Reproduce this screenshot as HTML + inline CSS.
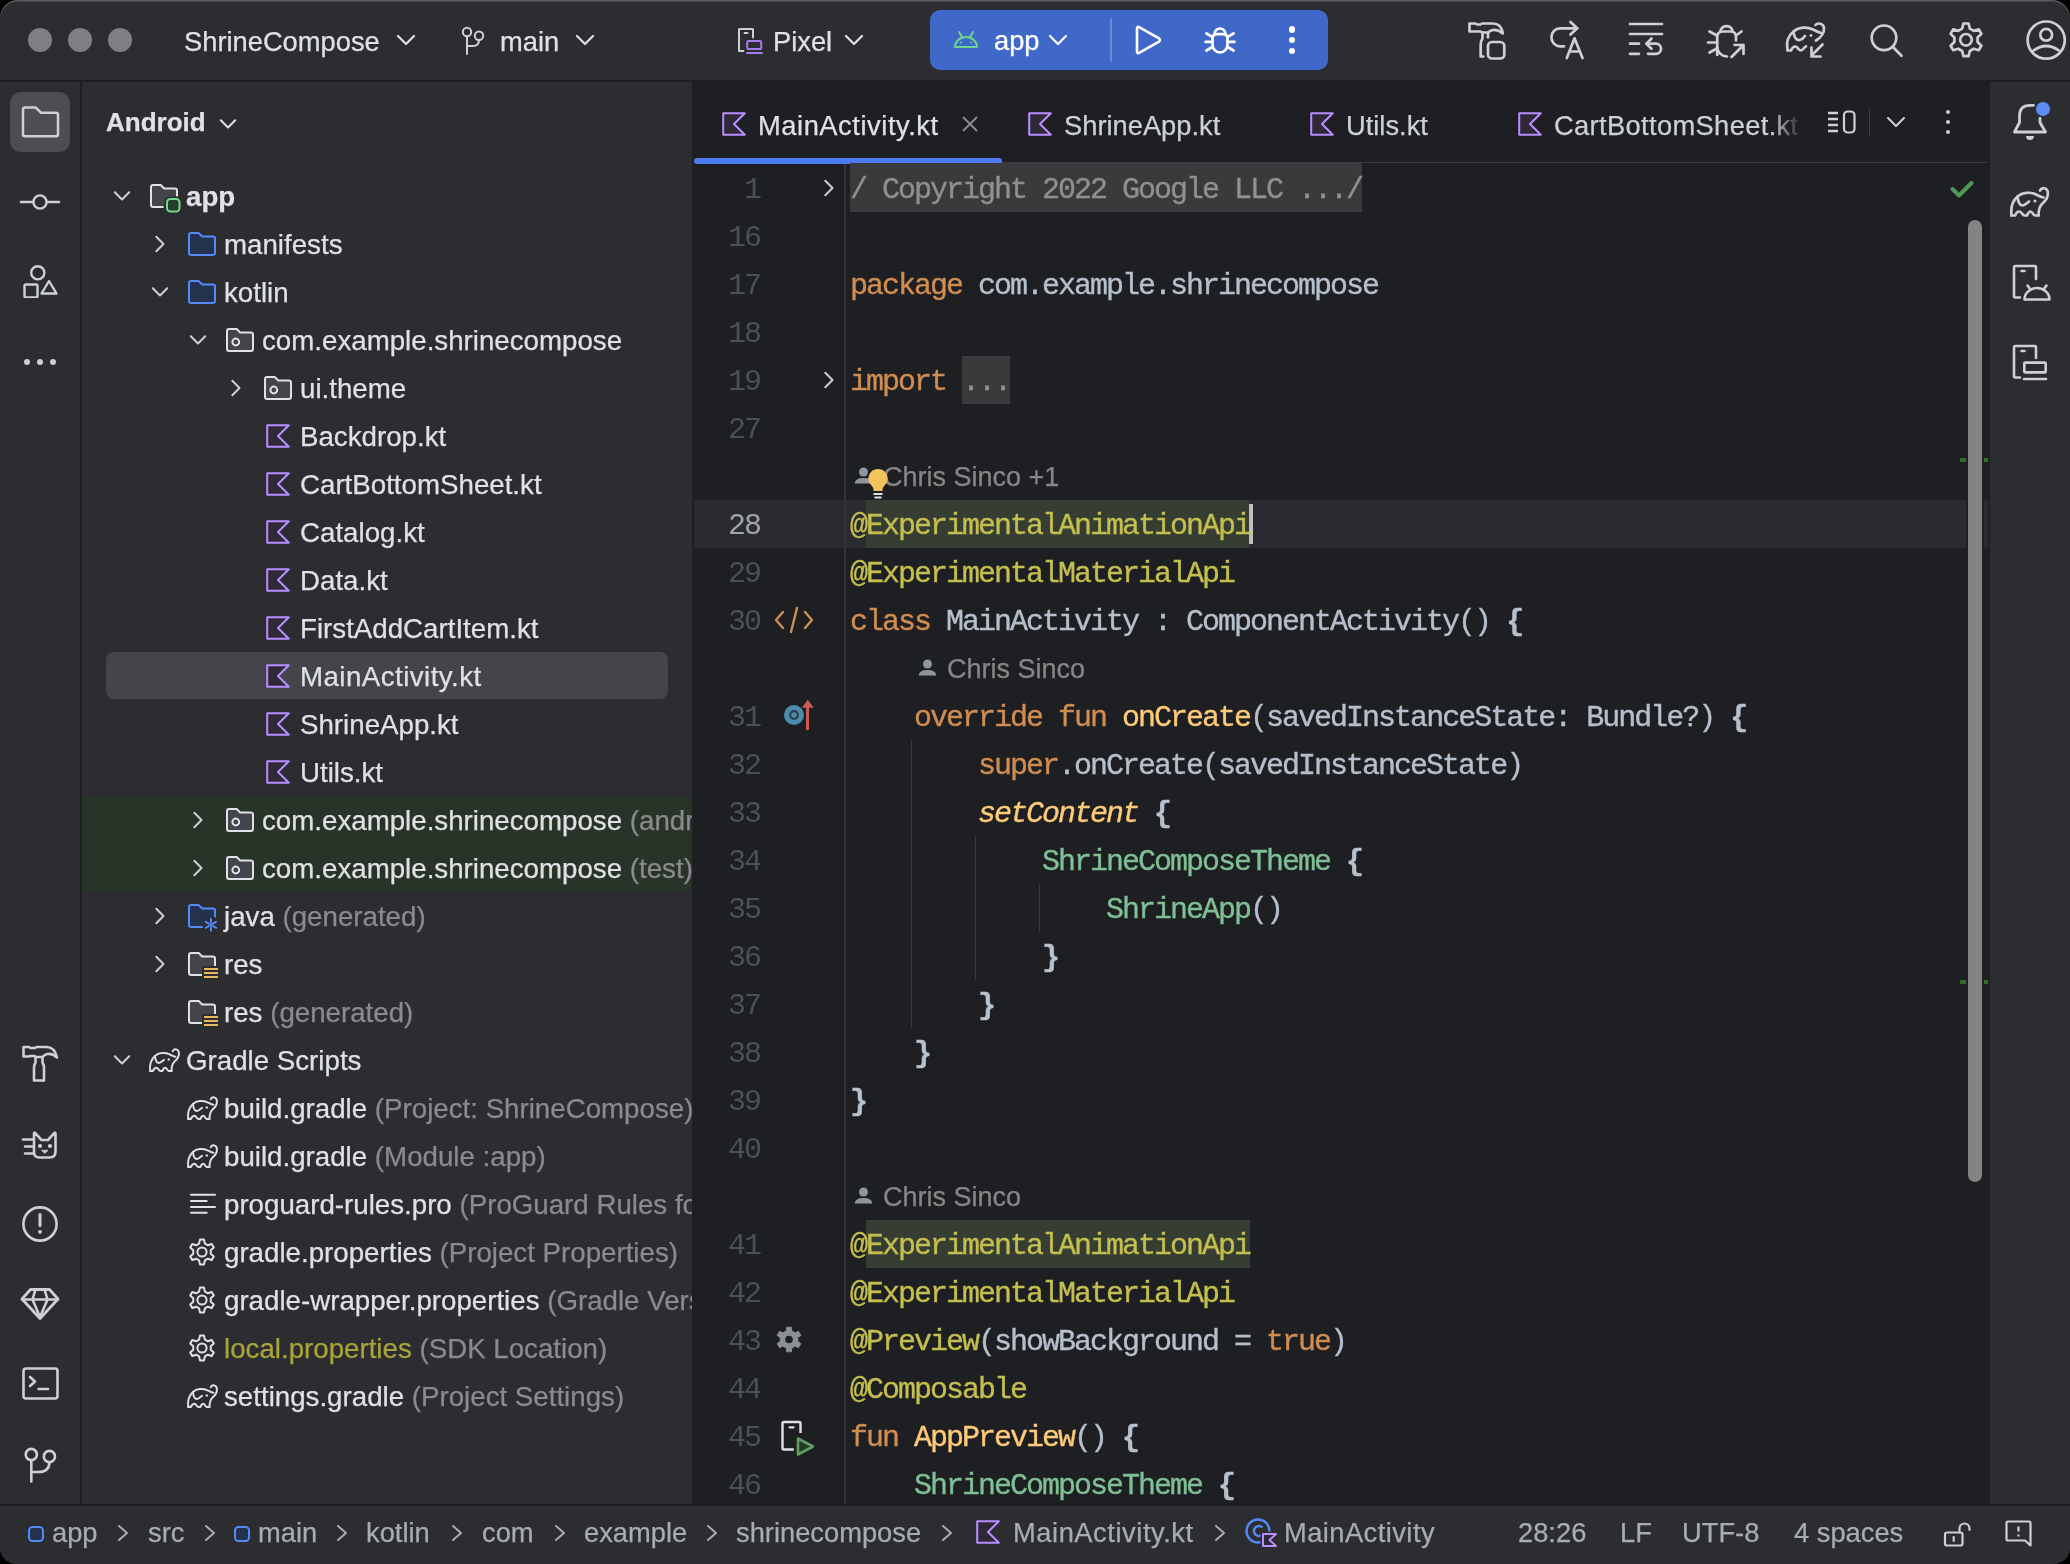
<!DOCTYPE html><html><head><meta charset="utf-8"><title>Android Studio</title><style>
*{box-sizing:border-box;margin:0;padding:0}
html,body{width:2070px;height:1564px;overflow:hidden;background:#000}
#win{position:absolute;left:0;top:0;width:2070px;height:1564px;border-radius:18px 18px 16px 16px;overflow:hidden;will-change:transform;background:#2B2D30;font-family:"Liberation Sans",sans-serif;color:#DFE1E5}
.a{position:absolute}
.t{white-space:pre;-webkit-text-stroke:0.25px currentColor}
.code{font-family:"Liberation Mono",monospace;white-space:pre;-webkit-text-stroke:0.35px currentColor}
</style></head><body><div id="win">
<div class="a" style="left:0;top:0;width:2070px;height:80px;background:#2B2D30"></div>
<div class="a" style="left:0;top:80px;width:2070px;height:2px;background:#1E1F22"></div>
<div class="a" style="left:80px;top:82px;width:2px;height:1422px;background:#1E1F22"></div>
<div class="a" style="left:692px;top:82px;width:1298px;height:1422px;background:#1E1F22"></div>
<div class="a" style="left:0;top:1504px;width:2070px;height:1.5px;background:#1E1F22"></div>
<div class="a" style="left:28px;top:28px;width:24px;height:24px;border-radius:50%;background:#808184"></div>
<div class="a" style="left:68px;top:28px;width:24px;height:24px;border-radius:50%;background:#808184"></div>
<div class="a" style="left:108px;top:28px;width:24px;height:24px;border-radius:50%;background:#808184"></div>
<div class="a t" style="left:184px;top:18px;font-size:27.3px;line-height:48px;color:#DFE1E5;font-weight:normal;">ShrineCompose</div>
<svg class="a" style="left:396px;top:34px" width="20" height="12" viewBox="-2 -2 20 12" fill="none" stroke="#DFE1E5" stroke-width="2.2" stroke-linecap="round" stroke-linejoin="round"><path d="M0 0L8.0 8L16 0"/></svg>
<svg class="a" style="left:455px;top:20px" width="40" height="40" viewBox="0 0 40 40" fill="none" stroke="#CED0D6" stroke-width="2" stroke-linecap="round" stroke-linejoin="round" ><circle cx="12" cy="12" r="4.2"/><circle cx="24" cy="15.7" r="4.2"/><path d="M12 16.5V34M24 20C24 24 22 26 18 26H12"/></svg>
<div class="a t" style="left:500px;top:18px;font-size:27.3px;line-height:48px;color:#DFE1E5;font-weight:normal;">main</div>
<svg class="a" style="left:575px;top:34px" width="20" height="12" viewBox="-2 -2 20 12" fill="none" stroke="#DFE1E5" stroke-width="2.2" stroke-linecap="round" stroke-linejoin="round"><path d="M0 0L8.0 8L16 0"/></svg>
<svg class="a" style="left:730px;top:20px" width="40" height="40" viewBox="0 0 40 40" fill="none" stroke="#CED0D6" stroke-width="2" stroke-linecap="round" stroke-linejoin="round" ><path d="M13.3 31H9.5Q9 31 9 30.5V9.5Q9 9 9.5 9H22.5Q23 9 23 9.5V17.6"/><path d="M14.5 13H17.5"/><rect x="17.2" y="21" width="14" height="8" rx="1.2" stroke="#A97BF0"/><path d="M17 33H32" stroke="#A97BF0"/></svg>
<div class="a t" style="left:773px;top:18px;font-size:27.3px;line-height:48px;color:#DFE1E5;font-weight:normal;">Pixel</div>
<svg class="a" style="left:844px;top:34px" width="20" height="12" viewBox="-2 -2 20 12" fill="none" stroke="#DFE1E5" stroke-width="2.2" stroke-linecap="round" stroke-linejoin="round"><path d="M0 0L8.0 8L16 0"/></svg>
<div class="a" style="left:930px;top:10px;width:398px;height:60px;border-radius:10px;background:#4068C9"></div>
<div class="a" style="left:1110px;top:18px;width:2px;height:44px;background:#6A8AD6"></div>
<svg class="a" style="left:950px;top:25px" width="32" height="28" viewBox="0 0 32 28" fill="none" stroke="#CED0D6" stroke-width="2" stroke-linecap="round" stroke-linejoin="round" ><path d="M5 22A11 10 0 0 1 27 22Z" stroke="#6ED58E"/><path d="M9 7L12 12M23 7L20 12" stroke="#6ED58E"/><circle cx="11" cy="17.5" r="1" fill="#6ED58E" stroke="none"/><circle cx="21" cy="17.5" r="1" fill="#6ED58E" stroke="none"/></svg>
<div class="a t" style="left:994px;top:16.8px;font-size:27.3px;line-height:48px;color:#FFFFFF;font-weight:normal;">app</div>
<svg class="a" style="left:1048px;top:34px" width="20" height="12" viewBox="-2 -2 20 12" fill="none" stroke="#FFFFFF" stroke-width="2.2" stroke-linecap="round" stroke-linejoin="round"><path d="M0 0L8.0 8L16 0"/></svg>
<svg class="a" style="left:1130px;top:22px" width="36" height="36" viewBox="0 0 36 36" fill="none" stroke="#CED0D6" stroke-width="2" stroke-linecap="round" stroke-linejoin="round" ><path d="M7 6.5Q7 4 9.5 5.4L29 16.4Q31 18 29 19.6L9.5 30.6Q7 32 7 29.5Z" stroke="#FFFFFF" stroke-width="2.6"/></svg>
<svg class="a" style="left:1200px;top:22px" width="40" height="36" viewBox="0 0 40 36" fill="none" stroke="#CED0D6" stroke-width="2" stroke-linecap="round" stroke-linejoin="round" ><path d="M14.5 12A5.5 5.5 0 0 1 25.5 12" stroke="#fff" stroke-width="2.7"/><path d="M12.5 16.5Q12.5 12.2 17 12.2H23Q27.5 12.2 27.5 16.5V22.5A7.5 8 0 0 1 12.5 22.5Z" stroke="#fff" stroke-width="2.7"/><path d="M6.5 11.5L12.3 14.8M33.5 11.5L27.7 14.8M5.5 19.8H12.5M34.5 19.8H27.5M6.5 28.5L12.3 25M33.5 28.5L27.7 25" stroke="#fff" stroke-width="2.7"/></svg>
<div class="a" style="left:1288.6px;top:26.3px;width:6.4px;height:6.4px;border-radius:50%;background:#fff"></div>
<div class="a" style="left:1288.6px;top:37.0px;width:6.4px;height:6.4px;border-radius:50%;background:#fff"></div>
<div class="a" style="left:1288.6px;top:47.599999999999994px;width:6.4px;height:6.4px;border-radius:50%;background:#fff"></div>
<svg class="a" style="left:1460px;top:15px" width="50" height="50" viewBox="0 0 50 50" fill="none" stroke="#CED0D6" stroke-width="2.7" stroke-linecap="round" stroke-linejoin="round" ><path d="M9.5 8.5H15.5L17 9.5H20.5L22 8.5H33C38.5 8.5 42 12.5 42.8 18.5C39.5 15.5 36 14.8 33 15C31 15.2 29.5 16.2 28 17.5H22L20.5 16.5H17L15.5 16.5H9.5Z"/><path d="M22.5 17.5V23.5Q20.7 26 20.7 30V41.5H23.3"/><path d="M28 17.5V22.3"/><rect x="28" y="27" width="16.3" height="16.5" rx="4"/></svg>
<svg class="a" style="left:1540px;top:15px" width="50" height="50" viewBox="0 0 50 50" fill="none" stroke="#CED0D6" stroke-width="2.7" stroke-linecap="round" stroke-linejoin="round" ><path d="M24 31.3H20A8.6 9 0 0 1 20 13.3H37.2"/><path d="M30.5 7L37.2 13.3L30.5 19.6"/><path d="M26.8 43L34.5 23.3L42.5 43M29.3 36.5H40"/></svg>
<svg class="a" style="left:1620px;top:15px" width="50" height="50" viewBox="0 0 50 50" fill="none" stroke="#CED0D6" stroke-width="2.7" stroke-linecap="round" stroke-linejoin="round" ><path d="M10 9H42M10 19H42M10 28.7H19M10 38.8H19"/><path d="M28 38.8H36A5 5 0 0 0 36 28.7H26.5"/><path d="M31.5 23.5L26.5 28.7L31.5 33.8"/></svg>
<svg class="a" style="left:1700px;top:15px" width="50" height="50" viewBox="0 0 50 50" fill="none" stroke="#CED0D6" stroke-width="2.7" stroke-linecap="round" stroke-linejoin="round" ><path d="M20.5 15.5A6.5 7 0 0 1 32.5 15.5"/><path d="M17.2 40V22Q17.2 16.5 23 16.5H30.5Q36 16.5 36 22V25.5"/><path d="M17.2 32A10 9.5 0 0 0 27 41.5"/><path d="M9.5 16.5L17 20.5M8 27.5H17M9.5 37.5L17 33.5M41.5 16.5L36 20.5"/><path d="M31.5 42L43.5 30M34.5 30H43.5V39"/></svg>
<svg class="a" style="left:1780px;top:15px" width="50" height="50" viewBox="0 0 50 50" fill="none" stroke="#CED0D6" stroke-width="2.7" stroke-linecap="round" stroke-linejoin="round" ><path d="M7.5 35C6 27.5 8.5 20.5 13.5 16.5C19 12 27 11.5 33 14.5C36 16 38.5 17.5 41.5 18"/><path d="M35.5 10C37.5 7.5 43.5 8 44 13C44.5 17.5 41 22.5 36 25.5"/><path d="M13.5 16.5C14 22 16 25.5 19.5 25C22 24.5 24 22.5 25 21"/><path d="M7.5 35.5H11C12 33 13.5 31.5 15.5 31.5C17.5 31.5 18.5 35.5 21 35.5C23 35.5 24 32 26 31.5"/><circle cx="31" cy="20.5" r="1.4" fill="#CED0D6" stroke="none"/><path d="M42.5 29.5L32 40M31.5 32.5V41.5H40.5"/></svg>
<svg class="a" style="left:1860px;top:15px" width="50" height="50" viewBox="0 0 50 50" fill="none" stroke="#CED0D6" stroke-width="2.7" stroke-linecap="round" stroke-linejoin="round" ><circle cx="24" cy="22.8" r="12.3"/><path d="M33 32L41.5 40.8"/></svg>
<svg class="a" style="left:1940px;top:15px" width="50" height="50" viewBox="0 0 50 50" fill="none" stroke="#CED0D6" stroke-width="2.7" stroke-linecap="round" stroke-linejoin="round" ><path d="M28.58 8.50L23.42 8.50L22.16 13.64L18.26 15.89L13.18 14.42L10.60 18.89L14.42 22.55L14.42 27.05L10.60 30.71L13.18 35.18L18.26 33.71L22.16 35.96L23.42 41.10L28.58 41.10L29.84 35.96L33.74 33.71L38.82 35.18L41.40 30.71L37.58 27.05L37.58 22.55L41.40 18.89L38.82 14.42L33.74 15.89L29.84 13.64Z"/><circle cx="26" cy="24.8" r="5.8"/></svg>
<svg class="a" style="left:2020px;top:15px" width="50" height="50" viewBox="0 0 50 50" fill="none" stroke="#CED0D6" stroke-width="2.7" stroke-linecap="round" stroke-linejoin="round" ><circle cx="26.2" cy="25.1" r="18.6"/><circle cx="26.2" cy="19.8" r="5.9"/><path d="M13.5 35.5Q26.2 26.5 39 35.5"/></svg>
<div class="a" style="left:10px;top:92px;width:60px;height:60px;border-radius:11px;background:#4C4E54"></div>
<svg class="a" style="left:16px;top:98px" width="48" height="48" viewBox="0 0 48 48" fill="none" stroke="#CED0D6" stroke-width="2" stroke-linecap="round" stroke-linejoin="round" ><path d="M7 11.5Q7 9.6 9 9.6H19.8L24.9 14.7H40Q42 14.7 42 16.7V36.2Q42 38.2 40 38.2H9Q7 38.2 7 36.2Z" stroke-width="2.5"/></svg>
<svg class="a" style="left:16px;top:178px" width="48" height="48" viewBox="0 0 48 48" fill="none" stroke="#CED0D6" stroke-width="2" stroke-linecap="round" stroke-linejoin="round" ><circle cx="24" cy="24" r="6.6" stroke-width="2.4"/><path d="M5 24H17.2M30.8 24H43" stroke-width="2.4"/></svg>
<svg class="a" style="left:16px;top:250px" width="48" height="48" viewBox="0 0 48 48" fill="none" stroke="#CED0D6" stroke-width="2" stroke-linecap="round" stroke-linejoin="round" ><circle cx="21.8" cy="22.8" r="6.6" stroke-width="2.4"/><rect x="8.5" y="34.5" width="13" height="13" rx="1.5" stroke-width="2.4"/><path d="M25.5 43.5L33 31L40.5 43.5Z" stroke-width="2.4"/></svg>
<div class="a" style="left:23.6px;top:358.6px;width:6.4px;height:6.4px;border-radius:50%;background:#CED0D6"></div>
<div class="a" style="left:36.8px;top:358.6px;width:6.4px;height:6.4px;border-radius:50%;background:#CED0D6"></div>
<div class="a" style="left:49.8px;top:358.6px;width:6.4px;height:6.4px;border-radius:50%;background:#CED0D6"></div>
<svg class="a" style="left:16px;top:1040px" width="48" height="48" viewBox="0 0 48 48" fill="none" stroke="#CED0D6" stroke-width="2" stroke-linecap="round" stroke-linejoin="round" ><path d="M7.5 7H13L14.5 8H19L20.5 7H30.5C36 7 39.5 11 41 17.5C38 14.5 34 13.5 31 14C29 14.5 27.5 16 26.5 17H20L18.5 16H14L13 16.5H7.5Z" stroke-width="2.6"/><path d="M19.5 17V22.5Q18 25 18 28V40.5H28V28Q28 25 26.5 22.5V17" stroke-width="2.6"/></svg>
<svg class="a" style="left:16px;top:1122px" width="48" height="48" viewBox="0 0 48 48" fill="none" stroke="#CED0D6" stroke-width="2" stroke-linecap="round" stroke-linejoin="round" ><path d="M18 11.5Q18 10 19.3 11.2L25.5 18H32L38.2 11.2Q39.5 10 39.5 11.5V29.5Q39.5 35.5 33.5 35.5H23.5Q18 35.5 18 30Z" stroke-width="2.6"/><path d="M7 17.5H17M9 24.5H17M9 31.5H17" stroke-width="2.6"/><circle cx="24" cy="24" r="2.1" fill="#CED0D6" stroke="none"/><circle cx="34" cy="24" r="2.1" fill="#CED0D6" stroke="none"/><path d="M26 28.3H32L29 31.2Z" fill="#CED0D6" stroke-width="1"/></svg>
<svg class="a" style="left:16px;top:1200px" width="48" height="48" viewBox="0 0 48 48" fill="none" stroke="#CED0D6" stroke-width="2" stroke-linecap="round" stroke-linejoin="round" ><circle cx="24" cy="24" r="16.6" stroke-width="2.6"/><path d="M24 14.5V25.5" stroke-width="3"/><circle cx="24" cy="31.8" r="1.9" fill="#CED0D6" stroke="none"/></svg>
<svg class="a" style="left:16px;top:1280px" width="48" height="48" viewBox="0 0 48 48" fill="none" stroke="#CED0D6" stroke-width="2" stroke-linecap="round" stroke-linejoin="round" ><path d="M14.5 9.5H33.5L42 19L24 38.5L6 19Z" stroke-width="2.8"/><path d="M6 19.5H42M19.5 9.5L16.5 19.5L24 37L31.5 19.5L28.5 9.5" stroke-width="2.6"/></svg>
<svg class="a" style="left:16px;top:1360px" width="48" height="48" viewBox="0 0 48 48" fill="none" stroke="#CED0D6" stroke-width="2" stroke-linecap="round" stroke-linejoin="round" ><rect x="7.5" y="8.5" width="34" height="30" rx="2.5" stroke-width="2.6"/><path d="M14 17L19 21.5L14 26M22.5 29H32" stroke-width="2.6"/></svg>
<svg class="a" style="left:16px;top:1440px" width="48" height="48" viewBox="0 0 48 48" fill="none" stroke="#CED0D6" stroke-width="2" stroke-linecap="round" stroke-linejoin="round" ><circle cx="15.3" cy="14.5" r="5.6" stroke-width="2.6"/><circle cx="33.4" cy="16.5" r="5.6" stroke-width="2.6"/><path d="M15.3 20.2V41.5M33.4 22.2Q33.4 32 22 32H15.3" stroke-width="2.6"/></svg>
<svg class="a" style="left:2005px;top:95px" width="50" height="50" viewBox="0 0 50 50" fill="none" stroke="#CED0D6" stroke-width="2" stroke-linecap="round" stroke-linejoin="round" ><path d="M28.5 10.3H25Q14.5 10.3 14.5 21V27.5L9.5 37H40.5L35 27.5V23.5" stroke-width="2.8"/><path d="M21 41H29A4 4 0 0 1 21 41Z" fill="#CED0D6" stroke="none"/></svg>
<div class="a" style="left:2036px;top:102px;width:14px;height:14px;border-radius:50%;background:#5E8CF6"></div>
<svg class="a" style="left:2002px;top:176px" width="50" height="50" viewBox="0 0 50 50" fill="none" stroke="#CED0D6" stroke-width="2.7" stroke-linecap="round" stroke-linejoin="round" ><path d="M9.5 39.5C8.5 31 11 24.5 15.5 20.5C20 16.5 28 15.5 34 18.5C37 20 39 21.5 41.5 21.5"/><path d="M38 14.5C40 11 45 11.5 45.8 16C46.5 20.5 43.5 25 40 28C37.5 30.5 36.5 34 36.5 39.5"/><path d="M9.5 39.5H13C14 37 15.5 35.5 17.5 35.5C19.5 35.5 20.5 39.5 22.5 39.5H25C26 37 27 35.5 28.5 35.5C30.5 35.5 31.5 39.5 33 39.5H36.5"/><path d="M15.5 20.5C16 25.5 17.5 29.5 20.5 29.5C23 29.5 25 27 27 25.5"/><circle cx="33" cy="25" r="1.5" fill="#CED0D6" stroke="none"/></svg>
<svg class="a" style="left:2005px;top:258px" width="50" height="50" viewBox="0 0 50 50" fill="none" stroke="#CED0D6" stroke-width="2" stroke-linecap="round" stroke-linejoin="round" ><path d="M15 39.5H10.5Q9 39.5 9 38V9.5Q9 8 10.5 8H29.5Q31 8 31 9.5V21" stroke-width="2.6"/><path d="M16.5 13H19.5" stroke-width="2.6"/><path d="M19.5 41.5A12.5 11.5 0 0 1 44.5 41.5Z" stroke-width="2.6"/><path d="M22.5 27.5L25.5 31.5M41.5 27.5L38.5 31.5" stroke-width="2.6"/></svg>
<svg class="a" style="left:2005px;top:338px" width="50" height="50" viewBox="0 0 50 50" fill="none" stroke="#CED0D6" stroke-width="2" stroke-linecap="round" stroke-linejoin="round" ><path d="M15 39.5H10.5Q9 39.5 9 38V9.5Q9 8 10.5 8H29.5Q31 8 31 9.5V20" stroke-width="2.6"/><path d="M16.5 13H19.5" stroke-width="2.6"/><rect x="19.3" y="24.6" width="21.4" height="9.8" rx="1" stroke-width="2.6"/><path d="M19 41H41" stroke-width="2.6"/></svg>
<div class="a" style="left:82px;top:82px;width:610px;height:1422px;overflow:hidden;background:#2B2D30"><div class="a" style="left:-82px;top:-82px;width:2070px;height:1564px">
<div class="a t" style="left:106px;top:98px;font-size:26px;line-height:48px;color:#DFE1E5;font-weight:bold;">Android</div>
<svg class="a" style="left:219px;top:118.5px;overflow:visible" width="18" height="10" viewBox="0 0 18 10" fill="none" stroke="#DFE1E5" stroke-width="2" stroke-linecap="round" stroke-linejoin="round"><path d="M1.8 1.3L9 8.5L16.2 1.3"/></svg>
<div class="a" style="left:82px;top:796px;width:610px;height:96px;background:#293429"></div>
<div class="a" style="left:106px;top:652px;width:562px;height:47px;border-radius:8px;background:#43454A"></div>
<svg class="a" style="left:113px;top:191px;overflow:visible" width="18" height="10" viewBox="0 0 18 10" fill="none" stroke="#CED0D6" stroke-width="2" stroke-linecap="round" stroke-linejoin="round"><path d="M1.8 1.3L9 8.5L16.2 1.3"/></svg>
<svg class="a" style="left:150px;top:184px;overflow:visible" width="28" height="24" viewBox="0 0 28 24" fill="none" stroke="#CED0D6" stroke-width="2" stroke-linecap="round" stroke-linejoin="round"><path d="M13 23H3.2Q1 23 1 20.8V3.2Q1 1 3.2 1H10.7L14.2 4.5H24.8Q27 4.5 27 6.7V12" fill="#43454A" stroke="#DFE1E5"/><path d="M13 23V12H27" fill="#43454A" stroke="none"/><rect x="17" y="15" width="12.5" height="12.5" rx="3.5" fill="#253B2C" stroke="#2B2D30" stroke-width="5"/><rect x="17" y="15" width="12.5" height="12.5" rx="3.5" fill="#253B2C" stroke="#6FDD8B"/></svg>
<div class="a t" style="left:186px;top:173px;font-size:27.7px;line-height:48px;color:#DFE1E5;font-weight:bold;">app</div>
<svg class="a" style="left:154.5px;top:235px;overflow:visible" width="10" height="18" viewBox="0 0 10 18" fill="none" stroke="#CED0D6" stroke-width="2" stroke-linecap="round" stroke-linejoin="round"><path d="M1.3 1.8L8.5 9L1.3 16.2"/></svg>
<svg class="a" style="left:188px;top:232px;overflow:visible" width="28" height="24" viewBox="0 0 28 24" fill="none" stroke="#CED0D6" stroke-width="2" stroke-linecap="round" stroke-linejoin="round"><path d="M1 3.2Q1 1 3.2 1H10.7L14.2 4.5H24.8Q27 4.5 27 6.7V20.8Q27 23 24.8 23H3.2Q1 23 1 20.8Z" fill="#25324D" stroke="#548AF7"/></svg>
<div class="a t" style="left:224px;top:221px;font-size:27.7px;line-height:48px;color:#DFE1E5;font-weight:normal;">manifests</div>
<svg class="a" style="left:151px;top:287px;overflow:visible" width="18" height="10" viewBox="0 0 18 10" fill="none" stroke="#CED0D6" stroke-width="2" stroke-linecap="round" stroke-linejoin="round"><path d="M1.8 1.3L9 8.5L16.2 1.3"/></svg>
<svg class="a" style="left:188px;top:280px;overflow:visible" width="28" height="24" viewBox="0 0 28 24" fill="none" stroke="#CED0D6" stroke-width="2" stroke-linecap="round" stroke-linejoin="round"><path d="M1 3.2Q1 1 3.2 1H10.7L14.2 4.5H24.8Q27 4.5 27 6.7V20.8Q27 23 24.8 23H3.2Q1 23 1 20.8Z" fill="#25324D" stroke="#548AF7"/></svg>
<div class="a t" style="left:224px;top:269px;font-size:27.7px;line-height:48px;color:#DFE1E5;font-weight:normal;">kotlin</div>
<svg class="a" style="left:189px;top:335px;overflow:visible" width="18" height="10" viewBox="0 0 18 10" fill="none" stroke="#CED0D6" stroke-width="2" stroke-linecap="round" stroke-linejoin="round"><path d="M1.8 1.3L9 8.5L16.2 1.3"/></svg>
<svg class="a" style="left:226px;top:328px;overflow:visible" width="28" height="24" viewBox="0 0 28 24" fill="none" stroke="#CED0D6" stroke-width="2" stroke-linecap="round" stroke-linejoin="round"><path d="M1 3.2Q1 1 3.2 1H10.7L14.2 4.5H24.8Q27 4.5 27 6.7V20.8Q27 23 24.8 23H3.2Q1 23 1 20.8Z" fill="#43454A" stroke="#DFE1E5"/><circle cx="9.8" cy="14" r="3.4" stroke="#DFE1E5"/></svg>
<div class="a t" style="left:262px;top:317px;font-size:27.7px;line-height:48px;color:#DFE1E5;font-weight:normal;">com.example.shrinecompose</div>
<svg class="a" style="left:230.5px;top:379px;overflow:visible" width="10" height="18" viewBox="0 0 10 18" fill="none" stroke="#CED0D6" stroke-width="2" stroke-linecap="round" stroke-linejoin="round"><path d="M1.3 1.8L8.5 9L1.3 16.2"/></svg>
<svg class="a" style="left:264px;top:376px;overflow:visible" width="28" height="24" viewBox="0 0 28 24" fill="none" stroke="#CED0D6" stroke-width="2" stroke-linecap="round" stroke-linejoin="round"><path d="M1 3.2Q1 1 3.2 1H10.7L14.2 4.5H24.8Q27 4.5 27 6.7V20.8Q27 23 24.8 23H3.2Q1 23 1 20.8Z" fill="#43454A" stroke="#DFE1E5"/><circle cx="9.8" cy="14" r="3.4" stroke="#DFE1E5"/></svg>
<div class="a t" style="left:300px;top:365px;font-size:27.7px;line-height:48px;color:#DFE1E5;font-weight:normal;">ui.theme</div>
<svg class="a" style="left:266px;top:424px;overflow:visible" width="24" height="24" viewBox="0 0 24 24" fill="none" stroke="#CED0D6" stroke-width="2" stroke-linecap="round" stroke-linejoin="round"><path d="M1.2 1.2H22.8L12 12L22.8 22.8H1.2Z" fill="#2F2838" stroke="#B98EFF"/></svg>
<div class="a t" style="left:300px;top:413px;font-size:27.7px;line-height:48px;color:#DFE1E5;font-weight:normal;">Backdrop.kt</div>
<svg class="a" style="left:266px;top:472px;overflow:visible" width="24" height="24" viewBox="0 0 24 24" fill="none" stroke="#CED0D6" stroke-width="2" stroke-linecap="round" stroke-linejoin="round"><path d="M1.2 1.2H22.8L12 12L22.8 22.8H1.2Z" fill="#2F2838" stroke="#B98EFF"/></svg>
<div class="a t" style="left:300px;top:461px;font-size:27.7px;line-height:48px;color:#DFE1E5;font-weight:normal;">CartBottomSheet.kt</div>
<svg class="a" style="left:266px;top:520px;overflow:visible" width="24" height="24" viewBox="0 0 24 24" fill="none" stroke="#CED0D6" stroke-width="2" stroke-linecap="round" stroke-linejoin="round"><path d="M1.2 1.2H22.8L12 12L22.8 22.8H1.2Z" fill="#2F2838" stroke="#B98EFF"/></svg>
<div class="a t" style="left:300px;top:509px;font-size:27.7px;line-height:48px;color:#DFE1E5;font-weight:normal;">Catalog.kt</div>
<svg class="a" style="left:266px;top:568px;overflow:visible" width="24" height="24" viewBox="0 0 24 24" fill="none" stroke="#CED0D6" stroke-width="2" stroke-linecap="round" stroke-linejoin="round"><path d="M1.2 1.2H22.8L12 12L22.8 22.8H1.2Z" fill="#2F2838" stroke="#B98EFF"/></svg>
<div class="a t" style="left:300px;top:557px;font-size:27.7px;line-height:48px;color:#DFE1E5;font-weight:normal;">Data.kt</div>
<svg class="a" style="left:266px;top:616px;overflow:visible" width="24" height="24" viewBox="0 0 24 24" fill="none" stroke="#CED0D6" stroke-width="2" stroke-linecap="round" stroke-linejoin="round"><path d="M1.2 1.2H22.8L12 12L22.8 22.8H1.2Z" fill="#2F2838" stroke="#B98EFF"/></svg>
<div class="a t" style="left:300px;top:605px;font-size:27.7px;line-height:48px;color:#DFE1E5;font-weight:normal;">FirstAddCartItem.kt</div>
<svg class="a" style="left:266px;top:664px;overflow:visible" width="24" height="24" viewBox="0 0 24 24" fill="none" stroke="#CED0D6" stroke-width="2" stroke-linecap="round" stroke-linejoin="round"><path d="M1.2 1.2H22.8L12 12L22.8 22.8H1.2Z" fill="#2F2838" stroke="#B98EFF"/></svg>
<div class="a t" style="left:300px;top:653px;font-size:27.7px;line-height:48px;color:#DFE1E5;font-weight:normal;letter-spacing:0.45px">MainActivity.kt</div>
<svg class="a" style="left:266px;top:712px;overflow:visible" width="24" height="24" viewBox="0 0 24 24" fill="none" stroke="#CED0D6" stroke-width="2" stroke-linecap="round" stroke-linejoin="round"><path d="M1.2 1.2H22.8L12 12L22.8 22.8H1.2Z" fill="#2F2838" stroke="#B98EFF"/></svg>
<div class="a t" style="left:300px;top:701px;font-size:27.7px;line-height:48px;color:#DFE1E5;font-weight:normal;">ShrineApp.kt</div>
<svg class="a" style="left:266px;top:760px;overflow:visible" width="24" height="24" viewBox="0 0 24 24" fill="none" stroke="#CED0D6" stroke-width="2" stroke-linecap="round" stroke-linejoin="round"><path d="M1.2 1.2H22.8L12 12L22.8 22.8H1.2Z" fill="#2F2838" stroke="#B98EFF"/></svg>
<div class="a t" style="left:300px;top:749px;font-size:27.7px;line-height:48px;color:#DFE1E5;font-weight:normal;">Utils.kt</div>
<svg class="a" style="left:192.5px;top:811px;overflow:visible" width="10" height="18" viewBox="0 0 10 18" fill="none" stroke="#CED0D6" stroke-width="2" stroke-linecap="round" stroke-linejoin="round"><path d="M1.3 1.8L8.5 9L1.3 16.2"/></svg>
<svg class="a" style="left:226px;top:808px;overflow:visible" width="28" height="24" viewBox="0 0 28 24" fill="none" stroke="#CED0D6" stroke-width="2" stroke-linecap="round" stroke-linejoin="round"><path d="M1 3.2Q1 1 3.2 1H10.7L14.2 4.5H24.8Q27 4.5 27 6.7V20.8Q27 23 24.8 23H3.2Q1 23 1 20.8Z" fill="#43454A" stroke="#DFE1E5"/><circle cx="9.8" cy="14" r="3.4" stroke="#DFE1E5"/></svg>
<div class="a t" style="left:262px;top:797px;font-size:27.7px;line-height:48px;color:#DFE1E5;font-weight:normal;">com.example.shrinecompose<span style="color:#8A8B8D"> (androidTest)</span></div>
<svg class="a" style="left:192.5px;top:859px;overflow:visible" width="10" height="18" viewBox="0 0 10 18" fill="none" stroke="#CED0D6" stroke-width="2" stroke-linecap="round" stroke-linejoin="round"><path d="M1.3 1.8L8.5 9L1.3 16.2"/></svg>
<svg class="a" style="left:226px;top:856px;overflow:visible" width="28" height="24" viewBox="0 0 28 24" fill="none" stroke="#CED0D6" stroke-width="2" stroke-linecap="round" stroke-linejoin="round"><path d="M1 3.2Q1 1 3.2 1H10.7L14.2 4.5H24.8Q27 4.5 27 6.7V20.8Q27 23 24.8 23H3.2Q1 23 1 20.8Z" fill="#43454A" stroke="#DFE1E5"/><circle cx="9.8" cy="14" r="3.4" stroke="#DFE1E5"/></svg>
<div class="a t" style="left:262px;top:845px;font-size:27.7px;line-height:48px;color:#DFE1E5;font-weight:normal;">com.example.shrinecompose<span style="color:#8A8B8D"> (test)</span></div>
<svg class="a" style="left:154.5px;top:907px;overflow:visible" width="10" height="18" viewBox="0 0 10 18" fill="none" stroke="#CED0D6" stroke-width="2" stroke-linecap="round" stroke-linejoin="round"><path d="M1.3 1.8L8.5 9L1.3 16.2"/></svg>
<svg class="a" style="left:188px;top:904px;overflow:visible" width="28" height="24" viewBox="0 0 28 24" fill="none" stroke="#CED0D6" stroke-width="2" stroke-linecap="round" stroke-linejoin="round"><path d="M1 3.2Q1 1 3.2 1H10.7L14.2 4.5H24.8Q27 4.5 27 6.7V20.8Q27 23 24.8 23H3.2Q1 23 1 20.8Z" fill="#25324D" stroke="#548AF7"/><circle cx="22.9" cy="20.8" r="8.5" fill="#2B2D30" stroke="none"/><path d="M22.90 18.40L22.90 14.80" stroke="#548AF7" stroke-width="2"/><path d="M24.98 19.60L28.10 17.80" stroke="#548AF7" stroke-width="2"/><path d="M24.98 22.00L28.10 23.80" stroke="#548AF7" stroke-width="2"/><path d="M22.90 23.20L22.90 26.80" stroke="#548AF7" stroke-width="2"/><path d="M20.82 22.00L17.70 23.80" stroke="#548AF7" stroke-width="2"/><path d="M20.82 19.60L17.70 17.80" stroke="#548AF7" stroke-width="2"/><circle cx="22.9" cy="20.8" r="1.6" fill="#548AF7" stroke="none"/></svg>
<div class="a t" style="left:224px;top:893px;font-size:27.7px;line-height:48px;color:#DFE1E5;font-weight:normal;">java<span style="color:#8A8B8D"> (generated)</span></div>
<svg class="a" style="left:154.5px;top:955px;overflow:visible" width="10" height="18" viewBox="0 0 10 18" fill="none" stroke="#CED0D6" stroke-width="2" stroke-linecap="round" stroke-linejoin="round"><path d="M1.3 1.8L8.5 9L1.3 16.2"/></svg>
<svg class="a" style="left:188px;top:952px;overflow:visible" width="28" height="24" viewBox="0 0 28 24" fill="none" stroke="#CED0D6" stroke-width="2" stroke-linecap="round" stroke-linejoin="round"><path d="M1 3.2Q1 1 3.2 1H10.7L14.2 4.5H24.8Q27 4.5 27 6.7V20.8Q27 23 24.8 23H3.2Q1 23 1 20.8Z" fill="#43454A" stroke="#DFE1E5"/><rect x="14" y="14" width="17" height="14" fill="#2B2D30" stroke="none"/><path d="M16 17H30M16 21H30M16 25H30" stroke="#E8B85C" stroke-width="2" stroke-linecap="butt"/></svg>
<div class="a t" style="left:224px;top:941px;font-size:27.7px;line-height:48px;color:#DFE1E5;font-weight:normal;">res</div>
<svg class="a" style="left:188px;top:1000px;overflow:visible" width="28" height="24" viewBox="0 0 28 24" fill="none" stroke="#CED0D6" stroke-width="2" stroke-linecap="round" stroke-linejoin="round"><path d="M1 3.2Q1 1 3.2 1H10.7L14.2 4.5H24.8Q27 4.5 27 6.7V20.8Q27 23 24.8 23H3.2Q1 23 1 20.8Z" fill="#43454A" stroke="#DFE1E5"/><rect x="14" y="14" width="17" height="14" fill="#2B2D30" stroke="none"/><path d="M16 17H30M16 21H30M16 25H30" stroke="#E8B85C" stroke-width="2" stroke-linecap="butt"/></svg>
<div class="a t" style="left:224px;top:989px;font-size:27.7px;line-height:48px;color:#DFE1E5;font-weight:normal;">res<span style="color:#8A8B8D"> (generated)</span></div>
<svg class="a" style="left:113px;top:1055px;overflow:visible" width="18" height="10" viewBox="0 0 18 10" fill="none" stroke="#CED0D6" stroke-width="2" stroke-linecap="round" stroke-linejoin="round"><path d="M1.8 1.3L9 8.5L16.2 1.3"/></svg>
<svg class="a" style="left:148.5px;top:1047.5px;overflow:visible" width="30.8" height="24.1" viewBox="8 10.5 39 30.5" fill="none" stroke="#DFE1E5" stroke-width="2.5" stroke-linecap="round" stroke-linejoin="round"><path d="M9.5 39.5C8.5 31 11 24.5 15.5 20.5C20 16.5 28 15.5 34 18.5C37 20 39 21.5 41.5 21.5"/><path d="M38 14.5C40 11 45 11.5 45.8 16C46.5 20.5 43.5 25 40 28C37.5 30.5 36.5 34 36.5 39.5"/><path d="M9.5 39.5H13C14 37 15.5 35.5 17.5 35.5C19.5 35.5 20.5 39.5 22.5 39.5H25C26 37 27 35.5 28.5 35.5C30.5 35.5 31.5 39.5 33 39.5H36.5"/><path d="M15.5 20.5C16 25.5 17.5 29.5 20.5 29.5C23 29.5 25 27 27 25.5"/><circle cx="33" cy="25" r="1.5" fill="#DFE1E5" stroke="none"/></svg>
<div class="a t" style="left:186px;top:1037px;font-size:27.7px;line-height:48px;color:#DFE1E5;font-weight:normal;">Gradle Scripts</div>
<svg class="a" style="left:186.5px;top:1095.5px;overflow:visible" width="30.8" height="24.1" viewBox="8 10.5 39 30.5" fill="none" stroke="#DFE1E5" stroke-width="2.5" stroke-linecap="round" stroke-linejoin="round"><path d="M9.5 39.5C8.5 31 11 24.5 15.5 20.5C20 16.5 28 15.5 34 18.5C37 20 39 21.5 41.5 21.5"/><path d="M38 14.5C40 11 45 11.5 45.8 16C46.5 20.5 43.5 25 40 28C37.5 30.5 36.5 34 36.5 39.5"/><path d="M9.5 39.5H13C14 37 15.5 35.5 17.5 35.5C19.5 35.5 20.5 39.5 22.5 39.5H25C26 37 27 35.5 28.5 35.5C30.5 35.5 31.5 39.5 33 39.5H36.5"/><path d="M15.5 20.5C16 25.5 17.5 29.5 20.5 29.5C23 29.5 25 27 27 25.5"/><circle cx="33" cy="25" r="1.5" fill="#DFE1E5" stroke="none"/></svg>
<div class="a t" style="left:224px;top:1085px;font-size:27.7px;line-height:48px;color:#DFE1E5;font-weight:normal;">build.gradle<span style="color:#8A8B8D"> (Project: ShrineCompose)</span></div>
<svg class="a" style="left:186.5px;top:1143.5px;overflow:visible" width="30.8" height="24.1" viewBox="8 10.5 39 30.5" fill="none" stroke="#DFE1E5" stroke-width="2.5" stroke-linecap="round" stroke-linejoin="round"><path d="M9.5 39.5C8.5 31 11 24.5 15.5 20.5C20 16.5 28 15.5 34 18.5C37 20 39 21.5 41.5 21.5"/><path d="M38 14.5C40 11 45 11.5 45.8 16C46.5 20.5 43.5 25 40 28C37.5 30.5 36.5 34 36.5 39.5"/><path d="M9.5 39.5H13C14 37 15.5 35.5 17.5 35.5C19.5 35.5 20.5 39.5 22.5 39.5H25C26 37 27 35.5 28.5 35.5C30.5 35.5 31.5 39.5 33 39.5H36.5"/><path d="M15.5 20.5C16 25.5 17.5 29.5 20.5 29.5C23 29.5 25 27 27 25.5"/><circle cx="33" cy="25" r="1.5" fill="#DFE1E5" stroke="none"/></svg>
<div class="a t" style="left:224px;top:1133px;font-size:27.7px;line-height:48px;color:#DFE1E5;font-weight:normal;">build.gradle<span style="color:#8A8B8D"> (Module :app)</span></div>
<svg class="a" style="left:190px;top:1193px;overflow:visible" width="26" height="22" viewBox="0 0 26 22" fill="none" stroke="#DFE1E5" stroke-width="2" stroke-linecap="round" stroke-linejoin="round"><path d="M1 1.7H25M1 8H16.7M1 14H25M1 19.8H16.7"/></svg>
<div class="a t" style="left:224px;top:1181px;font-size:27.7px;line-height:48px;color:#DFE1E5;font-weight:normal;">proguard-rules.pro<span style="color:#8A8B8D"> (ProGuard Rules for ShrineCompose.app)</span></div>
<svg class="a" style="left:188px;top:1238px;overflow:visible" width="28" height="28" viewBox="0 0 28 28" fill="none" stroke="#DFE1E5" stroke-width="2" stroke-linecap="round" stroke-linejoin="round"><path d="M15.97 1.56L12.03 1.56L11.10 5.58L8.16 7.28L4.21 6.07L2.24 9.48L5.26 12.30L5.26 15.70L2.24 18.52L4.21 21.93L8.16 20.72L11.10 22.42L12.03 26.44L15.97 26.44L16.90 22.42L19.84 20.72L23.79 21.93L25.76 18.52L22.74 15.70L22.74 12.30L25.76 9.48L23.79 6.07L19.84 7.28L16.90 5.58Z"/><circle cx="14" cy="14" r="4.6"/></svg>
<div class="a t" style="left:224px;top:1229px;font-size:27.7px;line-height:48px;color:#DFE1E5;font-weight:normal;">gradle.properties<span style="color:#8A8B8D"> (Project Properties)</span></div>
<svg class="a" style="left:188px;top:1286px;overflow:visible" width="28" height="28" viewBox="0 0 28 28" fill="none" stroke="#DFE1E5" stroke-width="2" stroke-linecap="round" stroke-linejoin="round"><path d="M15.97 1.56L12.03 1.56L11.10 5.58L8.16 7.28L4.21 6.07L2.24 9.48L5.26 12.30L5.26 15.70L2.24 18.52L4.21 21.93L8.16 20.72L11.10 22.42L12.03 26.44L15.97 26.44L16.90 22.42L19.84 20.72L23.79 21.93L25.76 18.52L22.74 15.70L22.74 12.30L25.76 9.48L23.79 6.07L19.84 7.28L16.90 5.58Z"/><circle cx="14" cy="14" r="4.6"/></svg>
<div class="a t" style="left:224px;top:1277px;font-size:27.7px;line-height:48px;color:#DFE1E5;font-weight:normal;">gradle-wrapper.properties<span style="color:#8A8B8D"> (Gradle Version)</span></div>
<svg class="a" style="left:188px;top:1334px;overflow:visible" width="28" height="28" viewBox="0 0 28 28" fill="none" stroke="#DFE1E5" stroke-width="2" stroke-linecap="round" stroke-linejoin="round"><path d="M15.97 1.56L12.03 1.56L11.10 5.58L8.16 7.28L4.21 6.07L2.24 9.48L5.26 12.30L5.26 15.70L2.24 18.52L4.21 21.93L8.16 20.72L11.10 22.42L12.03 26.44L15.97 26.44L16.90 22.42L19.84 20.72L23.79 21.93L25.76 18.52L22.74 15.70L22.74 12.30L25.76 9.48L23.79 6.07L19.84 7.28L16.90 5.58Z"/><circle cx="14" cy="14" r="4.6"/></svg>
<div class="a t" style="left:224px;top:1325px;font-size:27.7px;line-height:48px;color:#A8A43A;font-weight:normal;">local.properties<span style="color:#8A8B8D"> (SDK Location)</span></div>
<svg class="a" style="left:186.5px;top:1383.5px;overflow:visible" width="30.8" height="24.1" viewBox="8 10.5 39 30.5" fill="none" stroke="#DFE1E5" stroke-width="2.5" stroke-linecap="round" stroke-linejoin="round"><path d="M9.5 39.5C8.5 31 11 24.5 15.5 20.5C20 16.5 28 15.5 34 18.5C37 20 39 21.5 41.5 21.5"/><path d="M38 14.5C40 11 45 11.5 45.8 16C46.5 20.5 43.5 25 40 28C37.5 30.5 36.5 34 36.5 39.5"/><path d="M9.5 39.5H13C14 37 15.5 35.5 17.5 35.5C19.5 35.5 20.5 39.5 22.5 39.5H25C26 37 27 35.5 28.5 35.5C30.5 35.5 31.5 39.5 33 39.5H36.5"/><path d="M15.5 20.5C16 25.5 17.5 29.5 20.5 29.5C23 29.5 25 27 27 25.5"/><circle cx="33" cy="25" r="1.5" fill="#DFE1E5" stroke="none"/></svg>
<div class="a t" style="left:224px;top:1373px;font-size:27.7px;line-height:48px;color:#DFE1E5;font-weight:normal;">settings.gradle<span style="color:#8A8B8D"> (Project Settings)</span></div>
</div></div>
<div class="a" style="left:1002px;top:161.5px;width:985px;height:1.5px;background:#393B40"></div>
<div class="a" style="left:694px;top:158px;width:308px;height:6px;border-radius:3px;background:#4A7BEF"></div>
<svg class="a" style="left:722px;top:112px;overflow:visible" width="24" height="24" viewBox="0 0 24 24" fill="none" stroke="#CED0D6" stroke-width="2" stroke-linecap="round" stroke-linejoin="round"><path d="M1.2 1.2H22.8L12 12L22.8 22.8H1.2Z" fill="#2F2838" stroke="#B98EFF"/></svg>
<div class="a t" style="left:758px;top:101.5px;font-size:27.3px;line-height:48px;color:#DFE1E5;font-weight:normal;letter-spacing:0.55px">MainActivity.kt</div>
<svg class="a" style="left:962px;top:117px;overflow:visible" width="16" height="14" viewBox="0 0 16 14" fill="none" stroke="#8C8F94" stroke-width="1.8" stroke-linecap="round" stroke-linejoin="round"><path d="M1.5 0.5L14.5 13.5M14.5 0.5L1.5 13.5"/></svg>
<svg class="a" style="left:1028px;top:112px;overflow:visible" width="24" height="24" viewBox="0 0 24 24" fill="none" stroke="#CED0D6" stroke-width="2" stroke-linecap="round" stroke-linejoin="round"><path d="M1.2 1.2H22.8L12 12L22.8 22.8H1.2Z" fill="#2F2838" stroke="#B98EFF"/></svg>
<div class="a t" style="left:1064px;top:101.5px;font-size:27.3px;line-height:48px;color:#CDD0D5;font-weight:normal;">ShrineApp.kt</div>
<svg class="a" style="left:1310px;top:112px;overflow:visible" width="24" height="24" viewBox="0 0 24 24" fill="none" stroke="#CED0D6" stroke-width="2" stroke-linecap="round" stroke-linejoin="round"><path d="M1.2 1.2H22.8L12 12L22.8 22.8H1.2Z" fill="#2F2838" stroke="#B98EFF"/></svg>
<div class="a t" style="left:1346px;top:101.5px;font-size:27.3px;line-height:48px;color:#CDD0D5;font-weight:normal;">Utils.kt</div>
<svg class="a" style="left:1518px;top:112px;overflow:visible" width="24" height="24" viewBox="0 0 24 24" fill="none" stroke="#CED0D6" stroke-width="2" stroke-linecap="round" stroke-linejoin="round"><path d="M1.2 1.2H22.8L12 12L22.8 22.8H1.2Z" fill="#2F2838" stroke="#B98EFF"/></svg>
<div class="a" style="left:1554px;top:101.5px;width:248px;height:48px;overflow:hidden;-webkit-mask-image:linear-gradient(90deg,#000 88%,transparent 100%)"><div class="a t" style="left:0px;top:0px;font-size:27.3px;line-height:48px;color:#CDD0D5;font-weight:normal;letter-spacing:0.35px">CartBottomSheet.kt</div></div>
<svg class="a" style="left:1826px;top:108px;overflow:visible" width="32" height="28" viewBox="0 0 32 28" fill="none" stroke="#CED0D6" stroke-width="2" stroke-linecap="round" stroke-linejoin="round"><path d="M2 5H12M2 11H12M2 17H12M2 23H12" stroke-linecap="butt" stroke-width="2.3"/><rect x="18" y="3.5" width="10.5" height="21" rx="3.8" stroke-width="2.2"/></svg>
<div class="a" style="left:1868.5px;top:108.5px;width:1.5px;height:27px;background:#3E4045"></div>
<svg class="a" style="left:1886px;top:116px;overflow:visible" width="20" height="12" viewBox="0 0 20 12" fill="none" stroke="#CED0D6" stroke-width="2" stroke-linecap="round" stroke-linejoin="round"><path d="M2 2L10 10L18 2"/></svg>
<div class="a" style="left:1945.7px;top:109.7px;width:4.6px;height:4.6px;border-radius:50%;background:#CED0D6"></div>
<div class="a" style="left:1945.7px;top:119.8px;width:4.6px;height:4.6px;border-radius:50%;background:#CED0D6"></div>
<div class="a" style="left:1945.7px;top:129.7px;width:4.6px;height:4.6px;border-radius:50%;background:#CED0D6"></div>
<div class="a" style="left:694px;top:500px;width:1272px;height:48px;background:#2A2B30"></div>
<div class="a" style="left:1984px;top:500px;width:4px;height:48px;background:#2A2B30"></div>
<div class="a" style="left:850px;top:162.5px;width:512px;height:49.5px;background:#3A3A3C"></div>
<div class="a" style="left:962px;top:356px;width:48px;height:48px;background:#3A3A3C"></div>
<div class="a" style="left:866px;top:500px;width:384px;height:48px;background:#363D33"></div>
<div class="a" style="left:866px;top:1220px;width:384px;height:48px;background:#363D33"></div>
<div class="a" style="left:910.5px;top:740px;width:1.5px;height:288px;background:#393B40"></div>
<div class="a" style="left:974.5px;top:836px;width:1.5px;height:144px;background:#393B40"></div>
<div class="a" style="left:1038.5px;top:884px;width:1.5px;height:48px;background:#393B40"></div>
<div class="a" style="left:1249px;top:504px;width:4px;height:40px;background:#C0C0C0"></div>
<div class="a" style="left:844px;top:164px;width:2px;height:1340px;background:#313338"></div>
<div class="a code" style="left:744px;top:166px;font-size:30px;letter-spacing:-2px;line-height:48px;color:#4B5059;-webkit-text-stroke:0">1</div>
<div class="a code" style="left:728px;top:214px;font-size:30px;letter-spacing:-2px;line-height:48px;color:#4B5059;-webkit-text-stroke:0">16</div>
<div class="a code" style="left:728px;top:262px;font-size:30px;letter-spacing:-2px;line-height:48px;color:#4B5059;-webkit-text-stroke:0">17</div>
<div class="a code" style="left:728px;top:310px;font-size:30px;letter-spacing:-2px;line-height:48px;color:#4B5059;-webkit-text-stroke:0">18</div>
<div class="a code" style="left:728px;top:358px;font-size:30px;letter-spacing:-2px;line-height:48px;color:#4B5059;-webkit-text-stroke:0">19</div>
<div class="a code" style="left:728px;top:406px;font-size:30px;letter-spacing:-2px;line-height:48px;color:#4B5059;-webkit-text-stroke:0">27</div>
<div class="a code" style="left:728px;top:502px;font-size:30px;letter-spacing:-2px;line-height:48px;color:#A1A3AB;-webkit-text-stroke:0">28</div>
<div class="a code" style="left:728px;top:550px;font-size:30px;letter-spacing:-2px;line-height:48px;color:#4B5059;-webkit-text-stroke:0">29</div>
<div class="a code" style="left:728px;top:598px;font-size:30px;letter-spacing:-2px;line-height:48px;color:#4B5059;-webkit-text-stroke:0">30</div>
<div class="a code" style="left:728px;top:694px;font-size:30px;letter-spacing:-2px;line-height:48px;color:#4B5059;-webkit-text-stroke:0">31</div>
<div class="a code" style="left:728px;top:742px;font-size:30px;letter-spacing:-2px;line-height:48px;color:#4B5059;-webkit-text-stroke:0">32</div>
<div class="a code" style="left:728px;top:790px;font-size:30px;letter-spacing:-2px;line-height:48px;color:#4B5059;-webkit-text-stroke:0">33</div>
<div class="a code" style="left:728px;top:838px;font-size:30px;letter-spacing:-2px;line-height:48px;color:#4B5059;-webkit-text-stroke:0">34</div>
<div class="a code" style="left:728px;top:886px;font-size:30px;letter-spacing:-2px;line-height:48px;color:#4B5059;-webkit-text-stroke:0">35</div>
<div class="a code" style="left:728px;top:934px;font-size:30px;letter-spacing:-2px;line-height:48px;color:#4B5059;-webkit-text-stroke:0">36</div>
<div class="a code" style="left:728px;top:982px;font-size:30px;letter-spacing:-2px;line-height:48px;color:#4B5059;-webkit-text-stroke:0">37</div>
<div class="a code" style="left:728px;top:1030px;font-size:30px;letter-spacing:-2px;line-height:48px;color:#4B5059;-webkit-text-stroke:0">38</div>
<div class="a code" style="left:728px;top:1078px;font-size:30px;letter-spacing:-2px;line-height:48px;color:#4B5059;-webkit-text-stroke:0">39</div>
<div class="a code" style="left:728px;top:1126px;font-size:30px;letter-spacing:-2px;line-height:48px;color:#4B5059;-webkit-text-stroke:0">40</div>
<div class="a code" style="left:728px;top:1222px;font-size:30px;letter-spacing:-2px;line-height:48px;color:#4B5059;-webkit-text-stroke:0">41</div>
<div class="a code" style="left:728px;top:1270px;font-size:30px;letter-spacing:-2px;line-height:48px;color:#4B5059;-webkit-text-stroke:0">42</div>
<div class="a code" style="left:728px;top:1318px;font-size:30px;letter-spacing:-2px;line-height:48px;color:#4B5059;-webkit-text-stroke:0">43</div>
<div class="a code" style="left:728px;top:1366px;font-size:30px;letter-spacing:-2px;line-height:48px;color:#4B5059;-webkit-text-stroke:0">44</div>
<div class="a code" style="left:728px;top:1414px;font-size:30px;letter-spacing:-2px;line-height:48px;color:#4B5059;-webkit-text-stroke:0">45</div>
<div class="a code" style="left:728px;top:1462px;font-size:30px;letter-spacing:-2px;line-height:48px;color:#4B5059;-webkit-text-stroke:0">46</div>
<svg class="a" style="left:824px;top:179px;overflow:visible" width="10" height="18" viewBox="0 0 10 18" fill="none" stroke="#CED0D6" stroke-width="2" stroke-linecap="round" stroke-linejoin="round"><path d="M1.3 1.8L8.5 9L1.3 16.2"/></svg>
<svg class="a" style="left:824px;top:371px;overflow:visible" width="10" height="18" viewBox="0 0 10 18" fill="none" stroke="#CED0D6" stroke-width="2" stroke-linecap="round" stroke-linejoin="round"><path d="M1.3 1.8L8.5 9L1.3 16.2"/></svg>
<div class="a code" style="left:850px;top:166px;font-size:30px;letter-spacing:-2px;line-height:48px;color:#B6C0CC;"><span style="color:#8F9092;">/ Copyright 2022 Google LLC .../</span></div>
<div class="a code" style="left:850px;top:262px;font-size:30px;letter-spacing:-2px;line-height:48px;color:#B6C0CC;"><span style="color:#D08D51;">package</span><span style="color:#B6C0CC;"> com.example.shrinecompose</span></div>
<div class="a code" style="left:850px;top:358px;font-size:30px;letter-spacing:-2px;line-height:48px;color:#B6C0CC;"><span style="color:#D08D51;">import</span> <span style="color:#8F9092;">...</span></div>
<div class="a code" style="left:850px;top:502px;font-size:30px;letter-spacing:-2px;line-height:48px;color:#B6C0CC;"><span style="color:#C4BF4E;">@ExperimentalAnimationApi</span></div>
<div class="a code" style="left:850px;top:550px;font-size:30px;letter-spacing:-2px;line-height:48px;color:#B6C0CC;"><span style="color:#C4BF4E;">@ExperimentalMaterialApi</span></div>
<div class="a code" style="left:850px;top:598px;font-size:30px;letter-spacing:-2px;line-height:48px;color:#B6C0CC;"><span style="color:#D08D51;">class</span><span style="color:#B6C0CC;"> MainActivity : ComponentActivity() <b>{</b></span></div>
<div class="a code" style="left:850px;top:694px;font-size:30px;letter-spacing:-2px;line-height:48px;color:#B6C0CC;"><span style="color:#D08D51;">    override fun </span><span style="color:#FFCB78;">onCreate</span><span style="color:#B6C0CC;">(savedInstanceState: Bundle?) <b>{</b></span></div>
<div class="a code" style="left:850px;top:742px;font-size:30px;letter-spacing:-2px;line-height:48px;color:#B6C0CC;"><span style="color:#D08D51;">        super</span><span style="color:#B6C0CC;">.onCreate(savedInstanceState)</span></div>
<div class="a code" style="left:850px;top:790px;font-size:30px;letter-spacing:-2px;line-height:48px;color:#B6C0CC;"><span style="color:#FFCB78;font-style:italic">        setContent</span><span style="color:#B6C0CC;"> <b>{</b></span></div>
<div class="a code" style="left:850px;top:838px;font-size:30px;letter-spacing:-2px;line-height:48px;color:#B6C0CC;"><span style="color:#7FBF95;">            ShrineComposeTheme</span><span style="color:#B6C0CC;"> <b>{</b></span></div>
<div class="a code" style="left:850px;top:886px;font-size:30px;letter-spacing:-2px;line-height:48px;color:#B6C0CC;"><span style="color:#7FBF95;">                ShrineApp</span><span style="color:#B6C0CC;">()</span></div>
<div class="a code" style="left:850px;top:934px;font-size:30px;letter-spacing:-2px;line-height:48px;color:#B6C0CC;"><span style="color:#B6C0CC;">            <b>}</b></span></div>
<div class="a code" style="left:850px;top:982px;font-size:30px;letter-spacing:-2px;line-height:48px;color:#B6C0CC;"><span style="color:#B6C0CC;">        <b>}</b></span></div>
<div class="a code" style="left:850px;top:1030px;font-size:30px;letter-spacing:-2px;line-height:48px;color:#B6C0CC;"><span style="color:#B6C0CC;">    <b>}</b></span></div>
<div class="a code" style="left:850px;top:1078px;font-size:30px;letter-spacing:-2px;line-height:48px;color:#B6C0CC;"><span style="color:#B6C0CC;"><b>}</b></span></div>
<div class="a code" style="left:850px;top:1222px;font-size:30px;letter-spacing:-2px;line-height:48px;color:#B6C0CC;"><span style="color:#C4BF4E;">@ExperimentalAnimationApi</span></div>
<div class="a code" style="left:850px;top:1270px;font-size:30px;letter-spacing:-2px;line-height:48px;color:#B6C0CC;"><span style="color:#C4BF4E;">@ExperimentalMaterialApi</span></div>
<div class="a code" style="left:850px;top:1318px;font-size:30px;letter-spacing:-2px;line-height:48px;color:#B6C0CC;"><span style="color:#C4BF4E;">@Preview</span><span style="color:#B6C0CC;">(showBackground = </span><span style="color:#D08D51;">true</span><span style="color:#B6C0CC;">)</span></div>
<div class="a code" style="left:850px;top:1366px;font-size:30px;letter-spacing:-2px;line-height:48px;color:#B6C0CC;"><span style="color:#C4BF4E;">@Composable</span></div>
<div class="a code" style="left:850px;top:1414px;font-size:30px;letter-spacing:-2px;line-height:48px;color:#B6C0CC;"><span style="color:#D08D51;">fun </span><span style="color:#FFCB78;">AppPreview</span><span style="color:#B6C0CC;">() <b>{</b></span></div>
<div class="a code" style="left:850px;top:1462px;font-size:30px;letter-spacing:-2px;line-height:48px;color:#B6C0CC;"><span style="color:#7FBF95;">    ShrineComposeTheme</span><span style="color:#B6C0CC;"> <b>{</b></span></div>
<svg class="a" style="left:854px;top:467.2px" width="20" height="20" viewBox="0 0 20 20"><circle cx="9.5" cy="5" r="4.5" fill="#8E96A0"/><path d="M0.8 16.5Q0.8 11 9.5 11Q18.2 11 18.2 16.5Z" fill="#8E96A0"/></svg>
<div class="a t" style="left:883px;top:453.3px;font-size:27px;line-height:48px;color:#878787;font-weight:normal;">Chris Sinco +1</div>
<svg class="a" style="left:918px;top:659.2px" width="20" height="20" viewBox="0 0 20 20"><circle cx="9.5" cy="5" r="4.5" fill="#8E96A0"/><path d="M0.8 16.5Q0.8 11 9.5 11Q18.2 11 18.2 16.5Z" fill="#8E96A0"/></svg>
<div class="a t" style="left:947px;top:645.3px;font-size:27px;line-height:48px;color:#878787;font-weight:normal;">Chris Sinco</div>
<svg class="a" style="left:854px;top:1187.2px" width="20" height="20" viewBox="0 0 20 20"><circle cx="9.5" cy="5" r="4.5" fill="#8E96A0"/><path d="M0.8 16.5Q0.8 11 9.5 11Q18.2 11 18.2 16.5Z" fill="#8E96A0"/></svg>
<div class="a t" style="left:883px;top:1173.3px;font-size:27px;line-height:48px;color:#878787;font-weight:normal;">Chris Sinco</div>
<svg class="a" style="left:866px;top:467px" width="24" height="34" viewBox="0 0 24 34"><path d="M12 2A9.5 9.5 0 0 0 5.5 18.5Q7.5 20.5 7.5 23V24H16.5V23Q16.5 20.5 18.5 18.5A9.5 9.5 0 0 0 12 2Z" fill="#F2C55C"/><path d="M7.5 27H16.5M8.5 30.5H15.5" stroke="#DFE1E5" stroke-width="2"/></svg>
<svg class="a" style="left:774px;top:605px;overflow:visible" width="40" height="30" viewBox="0 0 40 30" fill="none" stroke="#D08D51" stroke-width="2.4" stroke-linecap="round" stroke-linejoin="round"><path d="M9 7L2 15L9 23M31 7L38 15L31 23M23 3L17 27"/></svg>
<svg class="a" style="left:780px;top:692px" width="40" height="48" viewBox="0 0 40 48"><circle cx="14" cy="23" r="10" fill="#4B8BAE"/><circle cx="14" cy="23" r="3.8" fill="none" stroke="#2E3E48" stroke-width="2.2"/><path d="M27.5 38V15" stroke="#C95D55" stroke-width="3"/><path d="M22 15.8H33.8L27.7 7.8Z" fill="#C95D55"/></svg>
<svg class="a" style="left:774px;top:1325px;overflow:visible" width="30" height="30" viewBox="0 0 30 30" fill="none" stroke="#8C8F94" stroke-width="1" stroke-linecap="round" stroke-linejoin="round"><path d="M17.39 2.23L12.61 2.23L12.37 5.89L8.86 7.92L5.57 6.30L3.18 10.43L6.23 12.48L6.23 16.52L3.18 18.57L5.57 22.70L8.86 21.08L12.37 23.11L12.61 26.77L17.39 26.77L17.63 23.11L21.14 21.08L24.43 22.70L26.82 18.57L23.77 16.52L23.77 12.48L26.82 10.43L24.43 6.30L21.14 7.92L17.63 5.89Z" fill="#8C8F94" stroke="#8C8F94" stroke-width="1"/><circle cx="15" cy="14.5" r="3.8" fill="#1E1F22" stroke="none"/></svg>
<svg class="a" style="left:770px;top:1412px" width="50" height="50" viewBox="0 0 50 50"><path d="M23.8 37.5H14Q12.5 37.5 12.5 36V11.5Q12.5 10 14 10H29Q30.5 10 30.5 11.5V21" stroke="#DFE1E5" stroke-width="2.4" fill="none"/><path d="M19.5 15.3H23.5" stroke="#DFE1E5" stroke-width="2.2" stroke-linecap="round"/><path d="M28 26.5L43 34.5L28 42.5Z" stroke="#5F9F62" stroke-width="2.6" fill="#253A26" stroke-linejoin="round"/></svg>
<div class="a" style="left:1950px;top:180px;width:24px;height:19px"><svg class="a" style="left:0px;top:0px;overflow:visible" width="24" height="19" viewBox="0 0 24 19" fill="none" stroke="#4F9A56" stroke-width="4" stroke-linecap="round" stroke-linejoin="round"><path d="M2.5 9L9 15.5L21.5 3"/></svg></div>
<div class="a" style="left:1968px;top:220px;width:14px;height:962px;border-radius:7px;background:#838383"></div>
<div class="a" style="left:1960px;top:458px;width:6px;height:4px;background:#336E29"></div>
<div class="a" style="left:1984px;top:458px;width:4px;height:4px;background:#336E29"></div>
<div class="a" style="left:1960px;top:980px;width:6px;height:4px;background:#336E29"></div>
<div class="a" style="left:1984px;top:980px;width:4px;height:4px;background:#336E29"></div>
<svg class="a" style="left:28px;top:1526px;overflow:visible" width="16" height="16" viewBox="0 0 16 16" fill="none" stroke="#CED0D6" stroke-width="2" stroke-linecap="round" stroke-linejoin="round"><rect x="1" y="1" width="14" height="14" rx="3.5" fill="#25324D" stroke="#548AF7"/></svg>
<div class="a t" style="left:52px;top:1509px;font-size:27.3px;line-height:48px;color:#A9ACB1;font-weight:normal;">app</div>
<svg class="a" style="left:118px;top:1524.5px;overflow:visible" width="10" height="16" viewBox="0 0 10 16" fill="none" stroke="#A9ACB1" stroke-width="2" stroke-linecap="round" stroke-linejoin="round"><path d="M1 1L9 8L1 15"/></svg>
<div class="a t" style="left:148px;top:1509px;font-size:27.3px;line-height:48px;color:#A9ACB1;font-weight:normal;">src</div>
<svg class="a" style="left:205px;top:1524.5px;overflow:visible" width="10" height="16" viewBox="0 0 10 16" fill="none" stroke="#A9ACB1" stroke-width="2" stroke-linecap="round" stroke-linejoin="round"><path d="M1 1L9 8L1 15"/></svg>
<svg class="a" style="left:234px;top:1526px;overflow:visible" width="16" height="16" viewBox="0 0 16 16" fill="none" stroke="#CED0D6" stroke-width="2" stroke-linecap="round" stroke-linejoin="round"><rect x="1" y="1" width="14" height="14" rx="3.5" fill="#25324D" stroke="#548AF7"/></svg>
<div class="a t" style="left:258px;top:1509px;font-size:27.3px;line-height:48px;color:#A9ACB1;font-weight:normal;">main</div>
<svg class="a" style="left:337px;top:1524.5px;overflow:visible" width="10" height="16" viewBox="0 0 10 16" fill="none" stroke="#A9ACB1" stroke-width="2" stroke-linecap="round" stroke-linejoin="round"><path d="M1 1L9 8L1 15"/></svg>
<div class="a t" style="left:366px;top:1509px;font-size:27.3px;line-height:48px;color:#A9ACB1;font-weight:normal;">kotlin</div>
<svg class="a" style="left:452px;top:1524.5px;overflow:visible" width="10" height="16" viewBox="0 0 10 16" fill="none" stroke="#A9ACB1" stroke-width="2" stroke-linecap="round" stroke-linejoin="round"><path d="M1 1L9 8L1 15"/></svg>
<div class="a t" style="left:482px;top:1509px;font-size:27.3px;line-height:48px;color:#A9ACB1;font-weight:normal;">com</div>
<svg class="a" style="left:555px;top:1524.5px;overflow:visible" width="10" height="16" viewBox="0 0 10 16" fill="none" stroke="#A9ACB1" stroke-width="2" stroke-linecap="round" stroke-linejoin="round"><path d="M1 1L9 8L1 15"/></svg>
<div class="a t" style="left:584px;top:1509px;font-size:27.3px;line-height:48px;color:#A9ACB1;font-weight:normal;">example</div>
<svg class="a" style="left:707px;top:1524.5px;overflow:visible" width="10" height="16" viewBox="0 0 10 16" fill="none" stroke="#A9ACB1" stroke-width="2" stroke-linecap="round" stroke-linejoin="round"><path d="M1 1L9 8L1 15"/></svg>
<div class="a t" style="left:736px;top:1509px;font-size:27.3px;line-height:48px;color:#A9ACB1;font-weight:normal;">shrinecompose</div>
<svg class="a" style="left:942px;top:1524.5px;overflow:visible" width="10" height="16" viewBox="0 0 10 16" fill="none" stroke="#A9ACB1" stroke-width="2" stroke-linecap="round" stroke-linejoin="round"><path d="M1 1L9 8L1 15"/></svg>
<svg class="a" style="left:976px;top:1520px;overflow:visible" width="24" height="24" viewBox="0 0 24 24" fill="none" stroke="#CED0D6" stroke-width="2" stroke-linecap="round" stroke-linejoin="round"><path d="M1.2 1.2H22.8L12 12L22.8 22.8H1.2Z" fill="#2F2838" stroke="#B98EFF"/></svg>
<div class="a t" style="left:1013px;top:1509px;font-size:27.3px;line-height:48px;color:#A9ACB1;font-weight:normal;letter-spacing:0.55px">MainActivity.kt</div>
<svg class="a" style="left:1215px;top:1524.5px;overflow:visible" width="10" height="16" viewBox="0 0 10 16" fill="none" stroke="#A9ACB1" stroke-width="2" stroke-linecap="round" stroke-linejoin="round"><path d="M1 1L9 8L1 15"/></svg>
<svg class="a" style="left:1244px;top:1518px" width="34" height="30" viewBox="0 0 34 30"><circle cx="14" cy="13" r="11.5" fill="none" stroke="#548AF7" stroke-width="2.4"/><path d="M18.5 9.5A5 5 0 1 0 18.5 16.5" fill="none" stroke="#548AF7" stroke-width="2.4"/><path d="M19 16H32L25.5 22L32 28H19Z" fill="#2B2D30" stroke="#2B2D30" stroke-width="5" stroke-linejoin="round"/><path d="M19 16H32L25.5 22L32 28H19Z" fill="#2F2838" stroke="#B98EFF" stroke-width="2" stroke-linejoin="round"/></svg>
<div class="a t" style="left:1284px;top:1509px;font-size:27.3px;line-height:48px;color:#A9ACB1;font-weight:normal;letter-spacing:0.45px">MainActivity</div>
<div class="a t" style="left:1518px;top:1509px;font-size:27.3px;line-height:48px;color:#A9ACB1;font-weight:normal;">28:26</div>
<div class="a t" style="left:1620px;top:1509px;font-size:27.3px;line-height:48px;color:#A9ACB1;font-weight:normal;">LF</div>
<div class="a t" style="left:1682px;top:1509px;font-size:27.3px;line-height:48px;color:#A9ACB1;font-weight:normal;">UTF-8</div>
<div class="a t" style="left:1794px;top:1509px;font-size:27.3px;line-height:48px;color:#A9ACB1;font-weight:normal;">4 spaces</div>
<svg class="a" style="left:1940px;top:1518px;overflow:visible" width="34" height="30" viewBox="0 0 34 30" fill="none" stroke="#CED0D6" stroke-width="2.2" stroke-linecap="round" stroke-linejoin="round"><rect x="5" y="14.5" width="17.5" height="13" rx="2"/><path d="M13.7 19V23"/><path d="M19.5 14.5V10.5A5 5 0 0 1 29.5 10.5V12"/></svg>
<svg class="a" style="left:2002px;top:1518px;overflow:visible" width="34" height="30" viewBox="0 0 34 30" fill="none" stroke="#CED0D6" stroke-width="2.2" stroke-linecap="round" stroke-linejoin="round"><path d="M4.5 5Q4.5 3.5 6 3.5H27Q28.5 3.5 28.5 5V27.5L23 22.5H6Q4.5 22.5 4.5 21Z"/><path d="M16.5 8.5V13.5" stroke-linecap="butt"/><path d="M16.5 16.5V18.5" stroke-linecap="butt"/></svg>
<div class="a" style="left:0;top:0;width:2070px;height:1564px;border-radius:18px;box-shadow:inset 0 1.5px 0 #5A5C60;pointer-events:none"></div>
</div></body></html>
